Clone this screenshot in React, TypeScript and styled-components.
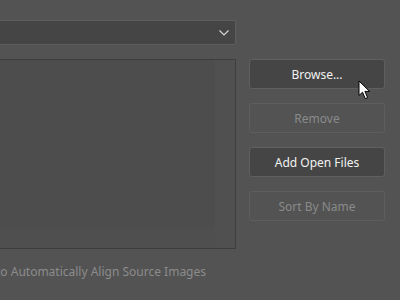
import styled, { createGlobalStyle } from 'styled-components';

const GlobalStyle = createGlobalStyle`
    html, body {
        margin: 0;
        background: #535353;
        overflow: hidden;
    }
    body {
        font-family: "Noto Sans", "DejaVu Sans", sans-serif;
        font-size: 12px;
    }
`;

const App = () => (
    <>
        <GlobalStyle />
        <Page>
            <LeftCol>
                <Select>
                    <Chevron viewBox="0 0 10 6">
                        <path d="M0.5 0.5 L5 5 L9.5 0.5" />
                    </Chevron>
                </Select>
                <FileList>
                    <ListBody />
                    <VTrack />
                    <HTrack />
                    <Corner />
                </FileList>
                <Option>to Automatically Align Source Images</Option>
            </LeftCol>
            <Actions>
                <Button>Browse...</Button>
                <Button disabled>Remove</Button>
                <Button>Add Open Files</Button>
                <Button disabled>Sort By Name</Button>
            </Actions>
        </Page>
        <Cursor viewBox="0 0 13 20">
            <path d="M1 1 L1 15.5 L4.5 12.2 L7.3 18.6 L9.6 17.6 L6.9 11.4 L11.6 11.4 Z" fill="#fff" stroke="#000" strokeWidth="1" />
        </Cursor>
    </>
);

export default App;

/*
 * Styled declarations
 */
const Page = styled.div`
    display: flex;
    gap: 13px;
    padding-top: 20px;
    height: 300px;
    box-sizing: border-box;
`;

const LeftCol = styled.div`
    display: flex;
    flex-direction: column;
    width: 256px;
    margin-left: -20px;
    flex-shrink: 0;
`;

const Select = styled.div`
    display: flex;
    align-items: center;
    justify-content: flex-end;
    height: 25px;
    box-sizing: border-box;
    padding: 0 6px 0 8px;
    background: #454545;
    border: 1px solid #5e5e5e;
    border-radius: 2px;
    margin-bottom: 14px;
`;

const Chevron = styled.svg`
    width: 10px;
    height: 6px;
    fill: none;
    stroke: #d6d6d6;
    stroke-width: 1.2;
`;

const FileList = styled.div`
    display: grid;
    grid-template-columns: 1fr 20px;
    grid-template-rows: 1fr 20px;
    height: 190px;
    box-sizing: border-box;
    border: 1px solid #3e3e3e;
    background: #4d4d4d;
`;

const ListBody = styled.div``;

const VTrack = styled.div`
    background: #505050;
`;

const HTrack = styled.div`
    background: #4f4f4f;
`;

const Corner = styled.div`
    background: #505050;
`;

const Option = styled.div`
    margin-top: 15px;
    margin-left: 16px;
    color: #8c8c8c;
    white-space: nowrap;
    line-height: 16px;
`;

const Actions = styled.div`
    display: flex;
    flex-direction: column;
    gap: 14px;
    width: 136px;
    margin-top: 39px;
`;

const Button = styled.button`
    height: 30px;
    box-sizing: border-box;
    font-family: inherit;
    font-size: 12px;
    color: #f2f2f2;
    background: #454545;
    border: 1px solid #5f5f5f;
    border-radius: 3px;
    padding: 0;

    &:disabled {
        color: #8a8a8a;
        background: #535353;
        border-color: #5e5e5e;
    }
`;

const Cursor = styled.svg`
    position: absolute;
    left: 358px;
    top: 80px;
    width: 13px;
    height: 20px;
`;
